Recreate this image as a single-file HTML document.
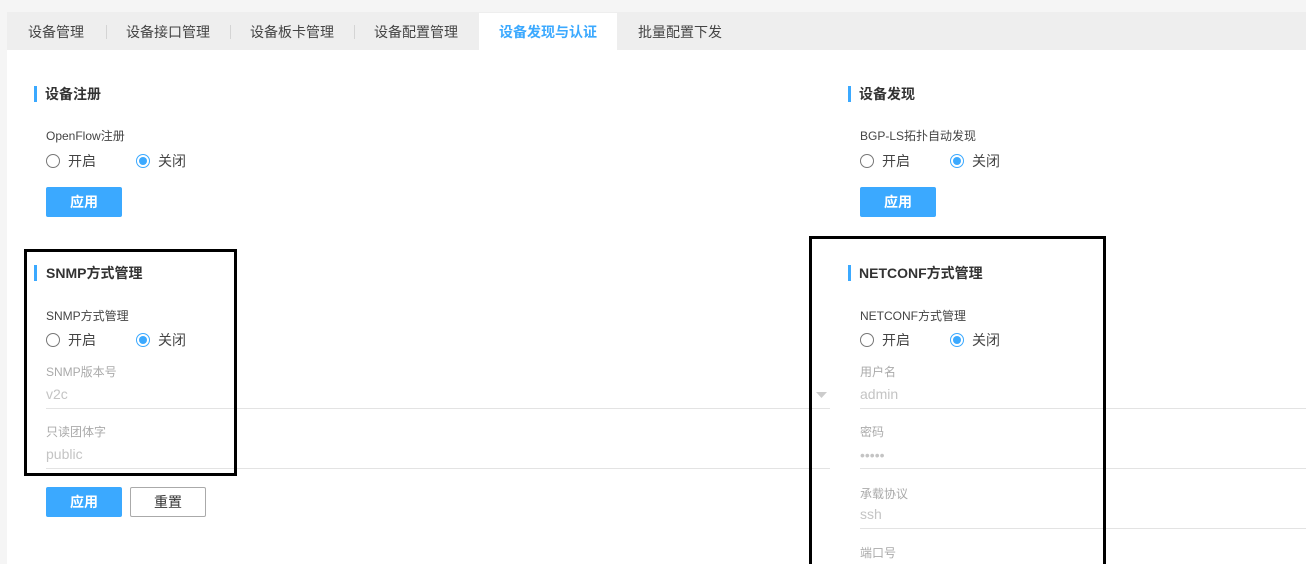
<!DOCTYPE html>
<html lang="zh">
<head>
<meta charset="utf-8">
<style>
html,body{margin:0;padding:0;width:1306px;height:564px;overflow:hidden}
body{background:#fff;font-family:"Liberation Sans","Noto Sans CJK SC",sans-serif;color:#333}
#w{position:relative;width:1306px;height:564px;overflow:hidden}
.a,.t,.h,.l,.d,.v,.r,.rl,.btn,.line,.sep,.bar{position:absolute;white-space:nowrap}
.t{font-size:14px;line-height:20px;top:22px;color:#444}
.sep{width:1px;height:14px;top:25px;background:#d4d4d4}
.bar{width:3px;height:16px;background:#3ba9ff}
.h{font-size:14px;font-weight:bold;line-height:20px;color:#333}
.l{font-size:12px;line-height:16px;color:#444}
.d{font-size:12px;line-height:16px;color:#aaa}
.v{font-size:14px;line-height:20px;color:#c4c4c4}
.r{width:14px;height:14px;box-sizing:border-box;border:1px solid #777;border-radius:50%}
.r.on{border-color:#3ba9ff}
.r.on:after{content:"";position:absolute;left:2px;top:2px;width:8px;height:8px;border-radius:50%;background:#3ba9ff}
.rl{font-size:14px;line-height:20px;color:#444}
.btn{width:76px;height:30px;box-sizing:border-box;border-radius:2px;background:#3ba9ff;color:#fff;font-size:14px;font-weight:bold;line-height:30px;text-align:center}
.btn.o{background:#fff;border:1px solid #aaa;color:#333;font-weight:normal;line-height:28px}
.line{height:1px;background:#e3e3e3}
.box{position:absolute;box-sizing:border-box;border:3px solid #000}
</style>
</head>
<body>
<div id="w">
<div class="a" style="left:0;top:0;width:1306px;height:12px;background:#f5f5f5"></div>
<div class="a" style="left:0;top:0;width:7px;height:564px;background:#f5f5f5"></div>
<div class="a" style="left:7px;top:12px;width:1299px;height:38px;background:#eee"></div>
<div class="a" style="left:479px;top:13px;width:138px;height:37px;background:#fff"></div>

<span class="t" style="left:28px">设备管理</span>
<div class="sep" style="left:106px"></div>
<span class="t" style="left:126px">设备接口管理</span>
<div class="sep" style="left:230px"></div>
<span class="t" style="left:250px">设备板卡管理</span>
<div class="sep" style="left:354px"></div>
<span class="t" style="left:374px">设备配置管理</span>
<span class="t" style="left:499px;color:#3ba9ff;font-weight:bold">设备发现与认证</span>
<span class="t" style="left:638px">批量配置下发</span>

<!-- 设备注册 -->
<div class="bar" style="left:34px;top:86px"></div>
<span class="h" style="left:45px;top:84px">设备注册</span>
<span class="l" style="left:46px;top:128px">OpenFlow注册</span>
<div class="r" style="left:46px;top:154px"></div>
<span class="rl" style="left:68px;top:151px">开启</span>
<div class="r on" style="left:136px;top:154px"></div>
<span class="rl" style="left:158px;top:151px">关闭</span>
<div class="btn" style="left:46px;top:187px">应用</div>

<!-- 设备发现 -->
<div class="bar" style="left:848px;top:86px"></div>
<span class="h" style="left:859px;top:84px">设备发现</span>
<span class="l" style="left:860px;top:128px">BGP-LS拓扑自动发现</span>
<div class="r" style="left:860px;top:154px"></div>
<span class="rl" style="left:882px;top:151px">开启</span>
<div class="r on" style="left:950px;top:154px"></div>
<span class="rl" style="left:972px;top:151px">关闭</span>
<div class="btn" style="left:860px;top:187px">应用</div>

<!-- SNMP -->
<div class="bar" style="left:34px;top:265px"></div>
<span class="h" style="left:46px;top:263px">SNMP方式管理</span>
<span class="l" style="left:46px;top:308px">SNMP方式管理</span>
<div class="r" style="left:46px;top:333px"></div>
<span class="rl" style="left:68px;top:330px">开启</span>
<div class="r on" style="left:136px;top:333px"></div>
<span class="rl" style="left:158px;top:330px">关闭</span>
<span class="d" style="left:46px;top:364px">SNMP版本号</span>
<span class="v" style="left:46px;top:384px">v2c</span>
<svg class="a" style="left:816px;top:392px" width="11" height="6" viewBox="0 0 11 6"><path d="M0 0H11L5.5 6Z" fill="#ccc"/></svg>
<div class="line" style="left:46px;top:408px;width:784px"></div>
<span class="d" style="left:46px;top:424px">只读团体字</span>
<span class="v" style="left:46px;top:444px">public</span>
<div class="line" style="left:46px;top:468px;width:784px"></div>
<div class="btn" style="left:46px;top:487px">应用</div>
<div class="btn o" style="left:130px;top:487px">重置</div>

<!-- NETCONF -->
<div class="bar" style="left:848px;top:265px"></div>
<span class="h" style="left:859px;top:263px">NETCONF方式管理</span>
<span class="l" style="left:860px;top:308px">NETCONF方式管理</span>
<div class="r" style="left:860px;top:333px"></div>
<span class="rl" style="left:882px;top:330px">开启</span>
<div class="r on" style="left:950px;top:333px"></div>
<span class="rl" style="left:972px;top:330px">关闭</span>
<span class="d" style="left:860px;top:364px">用户名</span>
<span class="v" style="left:860px;top:384px">admin</span>
<div class="line" style="left:860px;top:408px;width:446px"></div>
<span class="d" style="left:860px;top:424px">密码</span>
<span class="v" style="left:860px;top:445px">•••••</span>
<div class="line" style="left:860px;top:468px;width:446px"></div>
<span class="d" style="left:860px;top:486px">承载协议</span>
<span class="v" style="left:860px;top:504px">ssh</span>
<div class="line" style="left:860px;top:528px;width:446px"></div>
<span class="d" style="left:860px;top:545px">端口号</span>

<div class="box" style="left:24px;top:249px;width:213px;height:227px"></div>
<div class="box" style="left:809px;top:236px;width:297px;height:328px;border-bottom:0"></div>
</div>
</body>
</html>
